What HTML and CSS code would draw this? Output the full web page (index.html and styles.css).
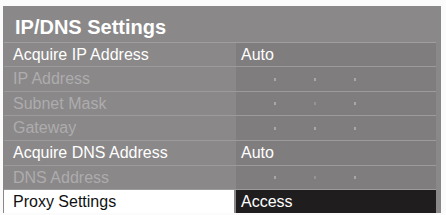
FILE: index.html
```html
<!DOCTYPE html>
<html lang="en">
<head>
  <meta charset="UTF-8">
  <meta name="viewport" content="width=device-width, initial-scale=1.0">
  <link rel="stylesheet" href="styles.css">
</head>
<body>
  <div class="settings-panel">
    <div class="panel-title">IP/DNS Settings</div>

    <div class="setting-row">
      <div class="setting-label">Acquire IP Address</div>
      <div class="setting-value">Auto</div>
    </div>

    <div class="setting-row disabled">
      <div class="setting-label">IP Address</div>
      <div class="setting-value ip-value">
        <span class="dot"></span><span class="dot"></span><span class="dot"></span>
      </div>
    </div>

    <div class="setting-row disabled">
      <div class="setting-label">Subnet Mask</div>
      <div class="setting-value ip-value">
        <span class="dot"></span><span class="dot faint"></span><span class="dot"></span>
      </div>
    </div>

    <div class="setting-row disabled">
      <div class="setting-label">Gateway</div>
      <div class="setting-value ip-value">
        <span class="dot"></span><span class="dot"></span><span class="dot"></span>
      </div>
    </div>

    <div class="setting-row">
      <div class="setting-label">Acquire DNS Address</div>
      <div class="setting-value">Auto</div>
    </div>

    <div class="setting-row disabled">
      <div class="setting-label">DNS Address</div>
      <div class="setting-value ip-value">
        <span class="dot"></span><span class="dot faint"></span><span class="dot"></span>
      </div>
    </div>

    <div class="setting-row selected">
      <div class="setting-label">Proxy Settings</div>
      <div class="setting-value">Access</div>
    </div>
  </div>
</body>
</html>
```

FILE: styles.css
```css
body {
  font-family: 'Liberation Sans', Arial, sans-serif;
  background-color: #fbfbfb;
  margin: 0;
  padding: 6px 5px 2px 3px;
}
.settings-panel {
  background-color: #8a8889;
  width: 438px;
  height: 207px;
  box-sizing: border-box;
  padding: 0 5px 0 1px;
  display: flex;
  flex-direction: column;
}
.panel-title {
  height: 37px;
  padding: 10px 0 0 11px;
  box-sizing: border-box;
  color: #fff;
  font-size: 20px;
  font-weight: bold;
  border-bottom: 1px solid #a09e9f;
}
.setting-row {
  display: grid;
  grid-template-columns: 230px 1fr;
  column-gap: 2px;
  height: 24px;
  border-bottom: 1px solid #9c9a9b;
  color: #fff;
  font-size: 16px;
}
.setting-label {
  padding: 3px 0 0 9px;
}
.setting-value {
  background-color: #7f7d7e;
  padding: 3px 0 0 5px;
}
.disabled {
  color: #aeacad;
}
.ip-value {
  display: flex;
  gap: 38px;
  padding: 0 0 0 38px;
  align-items: center;
}
.dot {
  width: 2px;
  height: 3px;
  background-color: #a8a6a7;
}
.dot.faint {
  background-color: #959394;
}
.selected {
  border-bottom: none;
  height: 23px;
  margin-top: auto;
}
.selected .setting-label {
  background-color: #fff;
  color: #111;
}
.selected .setting-value {
  background-color: #1f1d1e;
  color: #fff;
}
```
